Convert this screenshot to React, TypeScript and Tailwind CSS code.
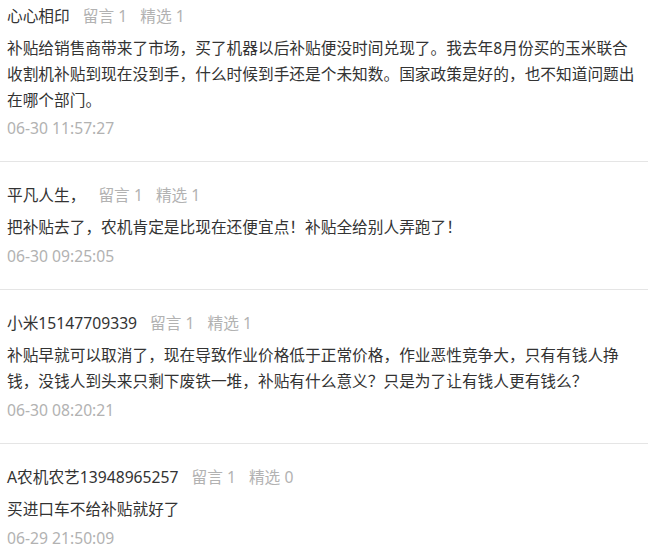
const comments = [
    {
        name: "心心相印",
        replies: 1,
        picks: 1,
        body: "补贴给销售商带来了市场，买了机器以后补贴便没时间兑现了。我去年8月份买的玉米联合收割机补贴到现在没到手，什么时候到手还是个未知数。国家政策是好的，也不知道问题出在哪个部门。",
        time: "06-30 11:57:27",
    },
    {
        name: "平凡人生，",
        replies: 1,
        picks: 1,
        body: "把补贴去了，农机肯定是比现在还便宜点！补贴全给别人弄跑了！",
        time: "06-30 09:25:05",
    },
    {
        name: "小米15147709339",
        replies: 1,
        picks: 1,
        body: "补贴早就可以取消了，现在导致作业价格低于正常价格，作业恶性竞争大，只有有钱人挣钱，没钱人到头来只剩下废铁一堆，补贴有什么意义？只是为了让有钱人更有钱么？",
        time: "06-30 08:20:21",
    },
    {
        name: "A农机农艺13948965257",
        replies: 1,
        picks: 0,
        body: "买进口车不给补贴就好了",
        time: "06-29 21:50:09",
    },
];

const App = () => {
    return (
        <div
            className="w-[648px] h-[560px] overflow-hidden bg-white text-[15.7px] leading-[26px] text-[#333]"
            style={{ fontFamily: '"Noto Sans", "Noto Sans CJK SC", sans-serif' }}
        >
            {comments.map((c, i) => (
                <div
                    key={i}
                    className={
                        i === 0
                            ? "pl-[7px] pr-[9px] pt-[3px] pb-[20px] border-b border-[#e5e5e5]"
                            : "pl-[7px] pr-[9px] pt-[20px] pb-[20px] border-b border-[#e5e5e5]"
                    }
                >
                    <div className="flex items-center">
                        <span>{c.name}</span>
                        <span className="ml-[13px] text-[#b2b2b2]">留言 {c.replies}</span>
                        <span className="ml-[13px] text-[#b2b2b2]">精选 {c.picks}</span>
                    </div>
                    <p className={i === 0 ? "mt-[6px]" : "mt-[6px]"}>{c.body}</p>
                    <p className={i === 0 ? "mt-[2px] text-[#b2b2b2]" : "mt-[3px] text-[#b2b2b2]"}>{c.time}</p>
                </div>
            ))}
        </div>
    );
};

export default App;
